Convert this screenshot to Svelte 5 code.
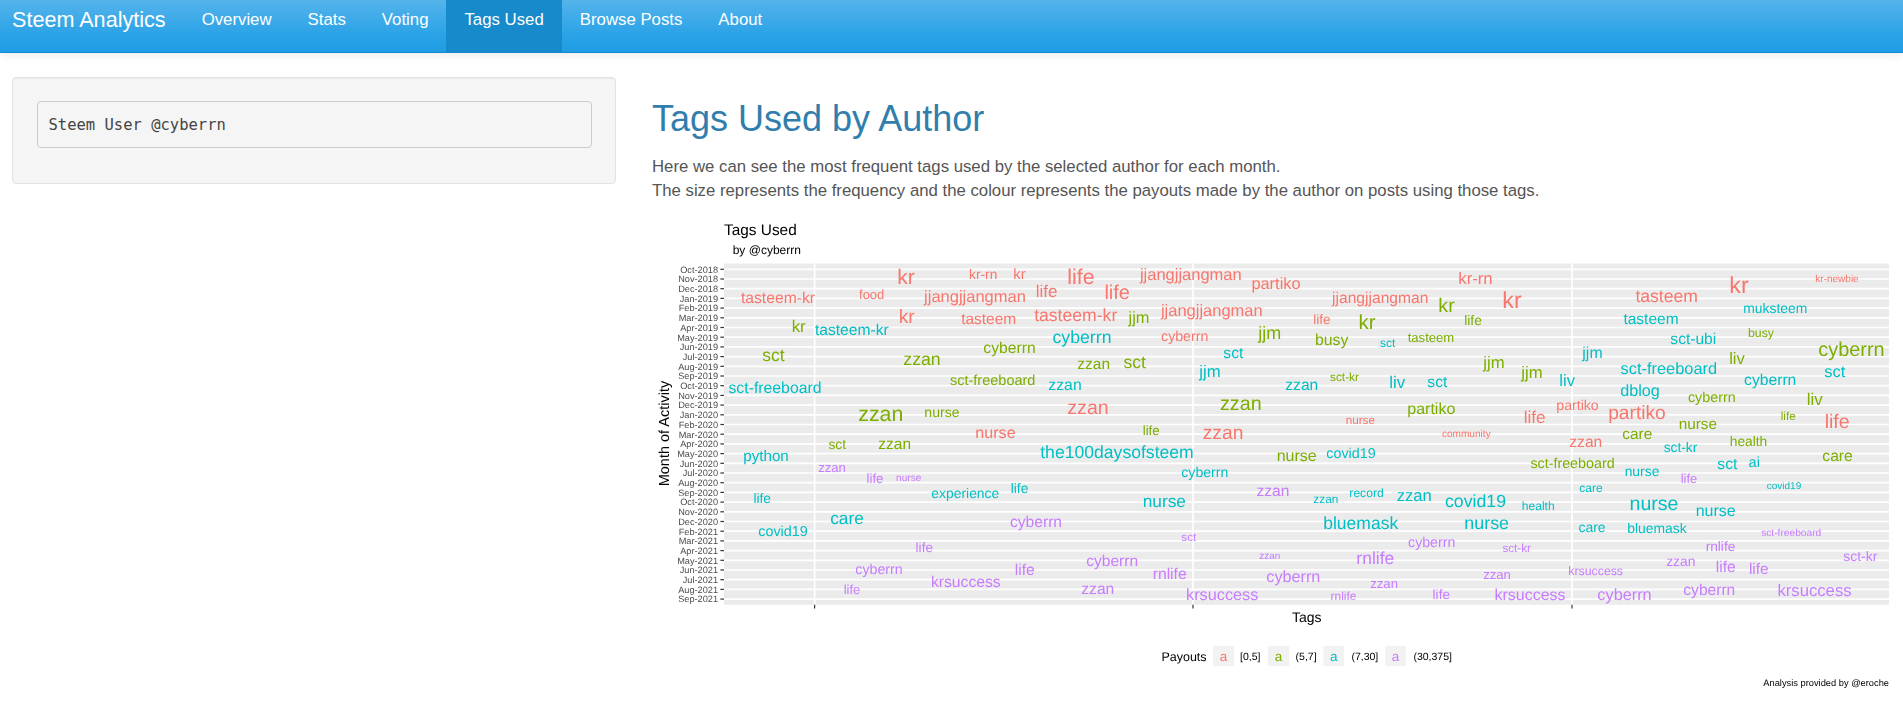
<script>
  const navItems = ['Overview', 'Stats', 'Voting', 'Tags Used', 'Browse Posts', 'About'];

  const months = [
    'Oct-2018', 'Nov-2018', 'Dec-2018', 'Jan-2019', 'Feb-2019', 'Mar-2019', 'Apr-2019', 'May-2019', 'Jun-2019',
    'Jul-2019', 'Aug-2019', 'Sep-2019', 'Oct-2019', 'Nov-2019', 'Dec-2019', 'Jan-2020', 'Feb-2020', 'Mar-2020',
    'Apr-2020', 'May-2020', 'Jun-2020', 'Jul-2020', 'Aug-2020', 'Sep-2020', 'Oct-2020', 'Nov-2020', 'Dec-2020',
    'Feb-2021', 'Mar-2021', 'Apr-2021', 'May-2021', 'Jun-2021', 'Jul-2021', 'Aug-2021', 'Sep-2021'
  ];
  const rowY = (i) => 269.3 + i * 9.7;

  const panel = { left: 724, right: 1889, top: 263.5, bottom: 604.8 };
  const xBreaks = [814.6, 1193, 1572];

  // word, centre x, baseline y, font size, payout bucket
  const words = [
    ['tasteem-kr', 778, 303.3, 15.7, 0], ['food', 871.7, 298.7, 13, 0], ['kr', 906, 284, 21, 0],
    ['kr-rn', 983.2, 279, 13.8, 0], ['kr', 1019.5, 279.3, 14.8, 0], ['jjangjjangman', 975, 302, 16.5, 0],
    ['life', 1046.5, 296.7, 17, 0], ['kr', 906.7, 323, 19.2, 0], ['tasteem', 988.7, 324, 15.5, 0],
    ['tasteem-kr', 1075.7, 321, 17.6, 0], ['kr', 798.7, 331.7, 16.8, 1], ['tasteem-kr', 851.8, 334.7, 15.6, 2],
    ['cyberrn', 1082, 343.3, 17.7, 2], ['sct', 773.5, 360.7, 17.5, 1], ['cyberrn', 1009.5, 353.3, 15.7, 1],
    ['zzan', 922, 364.7, 17.7, 1], ['sct-freeboard', 992.7, 385, 14.5, 1], ['sct-freeboard', 775, 392.7, 15.8, 2],
    ['zzan', 1065, 390, 15.8, 2], ['life', 1081, 284, 21.4, 0], ['life', 1117.2, 299, 20, 0],
    ['jjangjjangman', 1190.8, 280, 16.5, 0], ['partiko', 1276, 288.7, 16.4, 0], ['kr-rn', 1475.5, 284.3, 16.7, 0],
    ['jjangjjangman', 1380.2, 303.3, 15.6, 0], ['kr', 1446.5, 312.3, 19.6, 1], ['life', 1473, 325, 13.8, 1],
    ['jjm', 1139, 323.3, 16.4, 1], ['jjangjjangman', 1211.8, 316, 16.5, 0], ['life', 1322, 324, 13.6, 0],
    ['kr', 1367, 329.3, 20.4, 1], ['cyberrn', 1184.7, 341, 14.2, 0], ['jjm', 1269.8, 339.3, 18, 1],
    ['busy', 1331.7, 345, 15.8, 1], ['sct', 1387.7, 347.3, 12, 2], ['tasteem', 1431, 342, 13.1, 1],
    ['sct', 1233.3, 357.7, 15.6, 2], ['zzan', 1093.7, 368.7, 15.5, 1], ['sct', 1134.8, 367.7, 17.5, 1],
    ['jjm', 1210, 377.3, 16.7, 2], ['zzan', 1301.8, 390, 15.6, 2], ['sct-kr', 1344.5, 380.7, 11.9, 1],
    ['liv', 1397.3, 387.7, 16.9, 2], ['sct', 1437.3, 386.7, 15.6, 2], ['zzan', 1088, 414, 19.6, 0],
    ['zzan', 1240.8, 410, 19.7, 1], ['partiko', 1431.3, 414, 16, 1], ['kr', 1512, 307.7, 23.2, 0],
    ['tasteem', 1666.7, 301.7, 17.6, 0], ['kr', 1739, 292.7, 23.2, 0], ['kr-newbie', 1837, 281.7, 10, 0],
    ['muksteem', 1775.3, 312.7, 13.9, 2], ['tasteem', 1651, 324, 15.5, 2], ['sct-ubi', 1693.3, 344, 15.6, 2],
    ['busy', 1761, 337.3, 12.3, 1], ['jjm', 1592.5, 357.7, 15.9, 2], ['jjm', 1494, 368.3, 16.7, 1],
    ['jjm', 1532, 378.3, 16.7, 1], ['liv', 1567.2, 386, 16.6, 2], ['sct-freeboard', 1668.8, 374, 16.4, 2],
    ['liv', 1737, 364, 16.6, 1], ['cyberrn', 1851.5, 356, 19.9, 1], ['sct', 1834.8, 376.7, 16.4, 2],
    ['cyberrn', 1770.2, 385, 15.7, 2], ['dblog', 1640, 396, 16.2, 2], ['cyberrn', 1711.8, 402.3, 14.3, 1],
    ['liv', 1814.7, 404.7, 16.9, 1], ['partiko', 1577.5, 410, 14.1, 0], ['partiko', 1637, 419.3, 19.2, 0],
    ['zzan', 880.8, 420.7, 21.3, 1], ['nurse', 942, 417.3, 14.1, 1], ['nurse', 995.5, 438.3, 16.1, 0],
    ['the100daysofsteem', 1117, 458.3, 17.6, 2], ['sct', 837.2, 449, 13.8, 1], ['zzan', 894.7, 449, 15.5, 1],
    ['python', 766, 460.7, 15.2, 2], ['zzan', 832, 472, 13.1, 3], ['life', 875, 483.3, 13.3, 3],
    ['nurse', 908.7, 480.7, 10.1, 3], ['experience', 965.3, 497.7, 13.9, 2], ['life', 1019.5, 493.3, 13.8, 2],
    ['life', 762.2, 502.7, 13.8, 2], ['care', 847, 524.3, 17.3, 2], ['cyberrn', 1036, 526.7, 15.6, 3],
    ['covid19', 783, 535.7, 14.4, 2], ['life', 924.3, 551.7, 13.6, 3], ['cyberrn', 879, 574, 14.2, 3],
    ['life', 1024.7, 575, 15.6, 3], ['krsuccess', 965.8, 586.7, 15.7, 3], ['life', 852, 594, 13, 3],
    ['life', 1151.2, 434.7, 13.3, 1], ['zzan', 1223, 438.7, 19.3, 0], ['nurse', 1360.3, 424.3, 11.7, 0],
    ['community', 1466.3, 436.7, 10.1, 0], ['nurse', 1296.7, 461, 16, 1], ['covid19', 1351, 457.7, 14.3, 2],
    ['cyberrn', 1204.8, 477.3, 14.1, 2], ['zzan', 1273, 495.7, 15.6, 3], ['zzan', 1325.8, 502.7, 11.8, 2],
    ['record', 1366.5, 496.7, 12.1, 2], ['zzan', 1414.2, 500.7, 16.6, 2], ['covid19', 1475.5, 506.7, 17.7, 2],
    ['nurse', 1164.3, 506.7, 17.3, 2], ['bluemask', 1360.7, 529, 17.5, 2], ['nurse', 1486.7, 529.3, 17.9, 2],
    ['sct', 1188.8, 540.7, 11.7, 3], ['cyberrn', 1431.7, 547.3, 14.2, 3], ['cyberrn', 1112.2, 566, 15.5, 3],
    ['zzan', 1269.8, 558.7, 9.9, 3], ['rnlife', 1375.3, 564.3, 17.5, 3], ['rnlife', 1169.7, 579, 15.7, 3],
    ['cyberrn', 1293.3, 581.7, 16.2, 3], ['zzan', 1384.1, 587.7, 13.1, 3], ['zzan', 1097.8, 593.7, 15.6, 3],
    ['krsuccess', 1222.2, 599.7, 16.3, 3], ['rnlife', 1343.5, 600, 11.9, 3], ['life', 1441.3, 599.3, 13.6, 3],
    ['life', 1534.7, 423.3, 17.2, 0], ['nurse', 1697.8, 429, 15.3, 1], ['life', 1788.2, 420, 11.7, 1],
    ['life', 1837.2, 428.3, 19.6, 0], ['care', 1637.3, 439.3, 15.4, 1], ['zzan', 1585.8, 446.7, 15.6, 0],
    ['sct-kr', 1680.5, 451.7, 13.8, 2], ['health', 1748.5, 445.7, 13.8, 1], ['sct-freeboard', 1572.5, 468.3, 14.3, 1],
    ['nurse', 1642, 475.7, 13.9, 2], ['sct', 1727.3, 469.3, 15.6, 2], ['ai', 1754.3, 466.7, 14.6, 2],
    ['care', 1837.5, 461.3, 15.6, 1], ['life', 1689, 483, 13, 3], ['care', 1591, 492, 12, 2],
    ['covid19', 1784, 489, 10, 2], ['health', 1538.2, 510, 12.1, 2], ['nurse', 1654, 510, 19.6, 2],
    ['nurse', 1715.7, 515.7, 16, 2], ['care', 1592, 532.3, 14, 2], ['bluemask', 1657, 533.3, 13.9, 2],
    ['sct-freeboard', 1791.2, 535.7, 10.2, 3], ['sct-kr', 1516.7, 551.7, 11.7, 3], ['rnlife', 1720.5, 550.7, 13.7, 3],
    ['sct-kr', 1860.3, 561.3, 13.9, 3], ['zzan', 1680.8, 565.7, 13.9, 3], ['life', 1725.7, 571.7, 15.6, 3],
    ['life', 1758.8, 573.7, 15.4, 3], ['krsuccess', 1595.7, 575, 12.3, 3], ['zzan', 1497, 579, 13.1, 3],
    ['cyberrn', 1709.3, 595, 15.6, 3], ['krsuccess', 1814.5, 595.7, 16.7, 3], ['krsuccess', 1530, 599.7, 16, 3],
    ['cyberrn', 1624.5, 599.7, 16.3, 3]
  ];

  const legend = [
    { x: 1213, w: 21, label: '[0,5]', lx: 1240 },
    { x: 1268, w: 21, label: '(5,7]', lx: 1295.6 },
    { x: 1323.5, w: 20.5, label: '(7,30]', lx: 1351.4 },
    { x: 1385, w: 21, label: '(30,375]', lx: 1413.4 }
  ];
</script>

<nav class="navbar">
  <a class="brand" href="#home">Steem Analytics</a>
  <ul>
    {#each navItems as item}
      <li class:active={item === 'Tags Used'}><a href="#tab">{item}</a></li>
    {/each}
  </ul>
</nav>

<div class="page">
  <aside class="sidebar">
    <div class="well">
      <pre class="user">Steem User @cyberrn</pre>
    </div>
  </aside>

  <main class="content">
    <h2>Tags Used by Author</h2>
    <p>
      Here we can see the most frequent tags used by the selected author for each month.<br />
      The size represents the frequency and the colour represents the payouts made by the author on posts using those tags.
    </p>

    <svg class="plot" width="1251" height="490" viewBox="652 213 1251 490" role="img" aria-label="Tags used by month">
      <text class="title" x="724" y="235">Tags Used</text>
      <text class="subtitle" x="732.7" y="254">by @cyberrn</text>

      <rect class="panel" x={panel.left} y={panel.top} width={panel.right - panel.left} height={panel.bottom - panel.top} />
      {#each months as _, i}
        <line class="grid" x1={panel.left} x2={panel.right} y1={rowY(i)} y2={rowY(i)} />
      {/each}
      {#each xBreaks as x}
        <line class="grid" x1={x} x2={x} y1={panel.top} y2={panel.bottom} />
        <line class="tick" x1={x} x2={x} y1={panel.bottom} y2={panel.bottom + 3.6} />
      {/each}

      {#each months as month, i}
        <line class="tick" x1={panel.left - 3.6} x2={panel.left} y1={rowY(i)} y2={rowY(i)} />
        <text class="month" x="718" y={rowY(i) + 3.3}>{month}</text>
      {/each}

      {#each words as [word, x, y, size, bucket]}
        <text class="word c{bucket}" {x} {y} font-size={size}>{word}</text>
      {/each}

      <text class="axis-title ylab" transform="translate(669 433.5) rotate(-90)">Month of Activity</text>
      <text class="axis-title" x="1306.8" y="621.5">Tags</text>

      <text class="legend-title" x="1161.4" y="661">Payouts</text>
      {#each legend as key, i}
        <rect class="key" x={key.x} y="646" width={key.w} height="20" />
        <text class="word c{i}" x={key.x + key.w / 2} y="660.5" font-size="13.5">a</text>
        <text class="legend-label" x={key.lx} y="660">{key.label}</text>
      {/each}

      <text class="caption" x="1889" y="686">Analysis provided by @eroche</text>
    </svg>
  </main>
</div>

<style>
  :global(body) {
    margin: 0;
    background: #fff;
    color: #555;
    font-family: "Liberation Sans", Arial, sans-serif;
    font-size: 16.8px;
    line-height: 24px;
    overflow: hidden;
  }

  /* Navbar */
  .navbar {
    display: flex;
    height: 52px;
    background-image: linear-gradient(#54b4eb, #2fa4e7 60%, #1d9ce5);
    border-bottom: 1px solid #178acc;
    box-shadow: 0 1px 10px rgba(0, 0, 0, 0.1);
  }
  .navbar a {
    display: block;
    height: 52px;
    box-sizing: border-box;
    padding: 8px 18px 0;
    color: #fff;
    text-decoration: none;
    line-height: 24px;
  }
  .navbar .brand {
    padding-left: 12px;
    font-size: 21.6px;
  }
  .navbar ul {
    display: flex;
    margin: 0;
    padding: 0;
    list-style: none;
  }
  .navbar li.active a {
    background: #178acc;
  }

  /* Layout */
  .page {
    display: grid;
    grid-template-columns: 652px 1fr;
  }
  .sidebar {
    padding: 24px 36px 0 12px;
  }
  .well {
    padding: 23px 23.5px 35px;
    background: #f5f5f5;
    border: 1px solid #e3e3e3;
    border-radius: 4px;
    box-shadow: inset 0 1px 1px rgba(0, 0, 0, 0.05);
  }
  .user {
    height: 47px;
    box-sizing: border-box;
    margin: 0;
    padding: 0 11px;
    background: #f5f5f5;
    border: 1px solid #ccc;
    border-radius: 4px;
    color: #444;
    font-family: "DejaVu Sans Mono", monospace;
    font-size: 15.5px;
    line-height: 47px;
  }

  .content h2 {
    margin: 46px 0 16px;
    color: #317eac;
    font-size: 36px;
    font-weight: 400;
    line-height: 40px;
  }
  .content p {
    margin: 0 0 10px;
    font-size: 16.75px;
  }
  /* the reference chart is a scaled raster, hence the slight softening */
  .plot {
    display: block;
    filter: blur(0.35px);
  }

  /* Plot */
  .panel { fill: #ebebeb; }
  .grid { stroke: #fff; stroke-width: 1.7; }
  .tick { stroke: #333; stroke-width: 1.2; }
  .plot text { font-family: "Liberation Sans", Arial, sans-serif; text-rendering: geometricPrecision; }
  .title { font-size: 15.4px; fill: #000; }
  .subtitle { font-size: 12px; fill: #000; }
  .month { font-size: 9.2px; fill: #4d4d4d; text-anchor: end; }
  .word { text-anchor: middle; }
  .axis-title { font-size: 14px; fill: #000; text-anchor: middle; }
  .ylab { font-size: 14.5px; }
  .legend-title { font-size: 12.5px; fill: #000; }
  .legend-label { font-size: 10.5px; fill: #000; }
  .key { fill: #f2f2f2; }
  .caption { font-size: 9.3px; fill: #000; text-anchor: end; }
  .c0 { fill: #f8766d; }
  .c1 { fill: #7cae00; }
  .c2 { fill: #00bfc4; }
  .c3 { fill: #c77cff; }
</style>
